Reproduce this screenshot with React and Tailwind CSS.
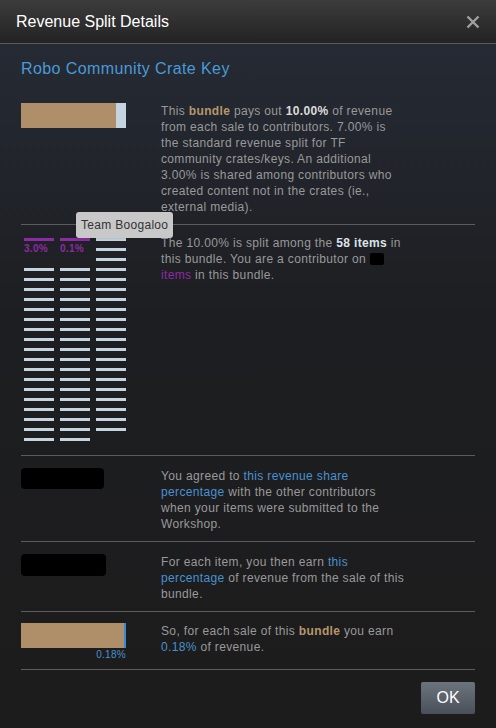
import React from 'react';

const purple = [{ label: '3.0%' }, { label: '0.1%' }];

function BarColumn({ top, count }) {
  return (
    <div className="flex w-[30px] flex-col">
      {top && (
        <div className="h-[30px]">
          <div className="h-[3px] bg-[#8e2aa3]" />
          <div className="mt-[1px] text-[10px] font-bold leading-[14px] tracking-[0.3px] text-[#8e2aa3]">{top}</div>
        </div>
      )}
      {Array.from({ length: count }).map((_, i) => (
        <div key={i} className="h-[10px]">
          <div className="h-[3px] bg-[#c6d4df]" />
        </div>
      ))}
    </div>
  );
}

function Row({ left, children, className = '' }) {
  return (
    <div className={`flex border-t border-[#5c5c5c] ${className}`}>
      <div className="w-[140px] shrink-0">{left}</div>
      <div className="w-[248px] text-[12px] leading-[16px] tracking-[0.35px] text-[#999]">{children}</div>
    </div>
  );
}

export default function App() {
  return (
    <div
      className="relative flex h-[728px] w-[496px] flex-col bg-[#1c1c1c]"
      style={{ fontFamily: '"Liberation Sans", Arial, sans-serif' }}
    >
      <div className="flex h-[44px] shrink-0 items-center justify-between border-b border-[#5a5a5a] bg-gradient-to-b from-[#3c3c3c] to-[#232323] pl-[16px] pr-[16px]">
        <span className="text-[16px] text-white">Revenue Split Details</span>
        <svg width="14" height="14" viewBox="0 0 14 14" className="mt-[1px]">
          <path d="M1.5 1.5 L12.5 12.5 M12.5 1.5 L1.5 12.5" stroke="#a0a0a0" strokeWidth="2.4" strokeLinecap="butt" />
        </svg>
      </div>

      <div className="flex flex-1 flex-col bg-gradient-to-b from-[#252a34] via-[#1d1e21] via-40% to-[#1c1c1c] px-[21px]">
        <div className="pt-[14px] text-[16px] leading-[22px] tracking-[0.4px] text-[#4a9ad8]">Robo Community Crate Key</div>

        <div className="mt-[23px] flex pb-[9px]">
          <div className="w-[140px] shrink-0">
            <div className="flex h-[25px] w-[105px]">
              <div className="w-[95px] bg-[#ae8f6a]" />
              <div className="w-[10px] bg-[#c6d4df]" />
            </div>
          </div>
          <div className="w-[236px] text-[12px] leading-[16px] tracking-[0.35px] text-[#999]">
            This <b className="text-[#b8966c]">bundle</b> pays out <b className="text-[#dcdcdc]">10.00%</b> of revenue from each sale to
            contributors. 7.00% is the standard revenue split for TF community crates/keys. An additional 3.00% is shared among
            contributors who created content not in the crates (ie., external media).
          </div>
        </div>

        <Row
          className="pt-[10px] pb-[7px]"
          left={
            <div className="relative flex gap-[6px] pl-[3px] pt-[3px]">
              <BarColumn top={purple[0].label} count={18} />
              <BarColumn top={purple[1].label} count={18} />
              <BarColumn count={20} />
              <div className="absolute left-[55px] top-[-23px] whitespace-nowrap rounded-[3px] bg-[#c8c8c8] px-[5px] text-[12px] leading-[26px] tracking-[0.3px] text-[#333] shadow">
                Team Boogaloo
              </div>
            </div>
          }
        >
          The 10.00% is split among the <b className="text-[#dde3e8]">58 items</b> in this bundle. You are a contributor on{' '}
          <span className="inline-block h-[12px] w-[14px] translate-y-[2px] rounded-[2px] bg-black" />{' '}
          <span className="text-[#8e2aa3]">items</span> in this bundle.
        </Row>

        <Row className="pt-[12px] pb-[9px]" left={<div className="h-[21px] w-[83px] rounded-[4px] bg-black" />}>
          You agreed to <span className="text-[#4a90d0]">this revenue share percentage</span> with the other contributors when your
          items were submitted to the Workshop.
        </Row>

        <Row className="pt-[12px] pb-[9px]" left={<div className="h-[22px] w-[85px] rounded-[4px] bg-black" />}>
          For each item, you then earn <span className="text-[#4a90d0]">this percentage</span> of revenue from the sale of this
          bundle.
        </Row>

        <Row
          className="pt-[11px] pb-[7px]"
          left={
            <div className="w-[105px]">
              <div className="flex h-[25px]">
                <div className="w-[103px] bg-[#ae8f6a]" />
                <div className="w-[2px] bg-[#3b8ad8]" />
              </div>
              <div className="text-right text-[10px] leading-[14px] tracking-[0.3px] text-[#4a90d0]">0.18%</div>
            </div>
          }
        >
          So, for each sale of this <b className="text-[#b8966c]">bundle</b> you earn <span className="text-[#4a90d0]">0.18%</span> of
          revenue.
        </Row>

        <div className="flex justify-end border-t border-[#5c5c5c] pt-[12px]">
          <button className="h-[32px] w-[54px] rounded-[2px] bg-gradient-to-b from-[#6c747d] to-[#4a5059] text-[16px] text-white">
            OK
          </button>
        </div>
      </div>
    </div>
  );
}
